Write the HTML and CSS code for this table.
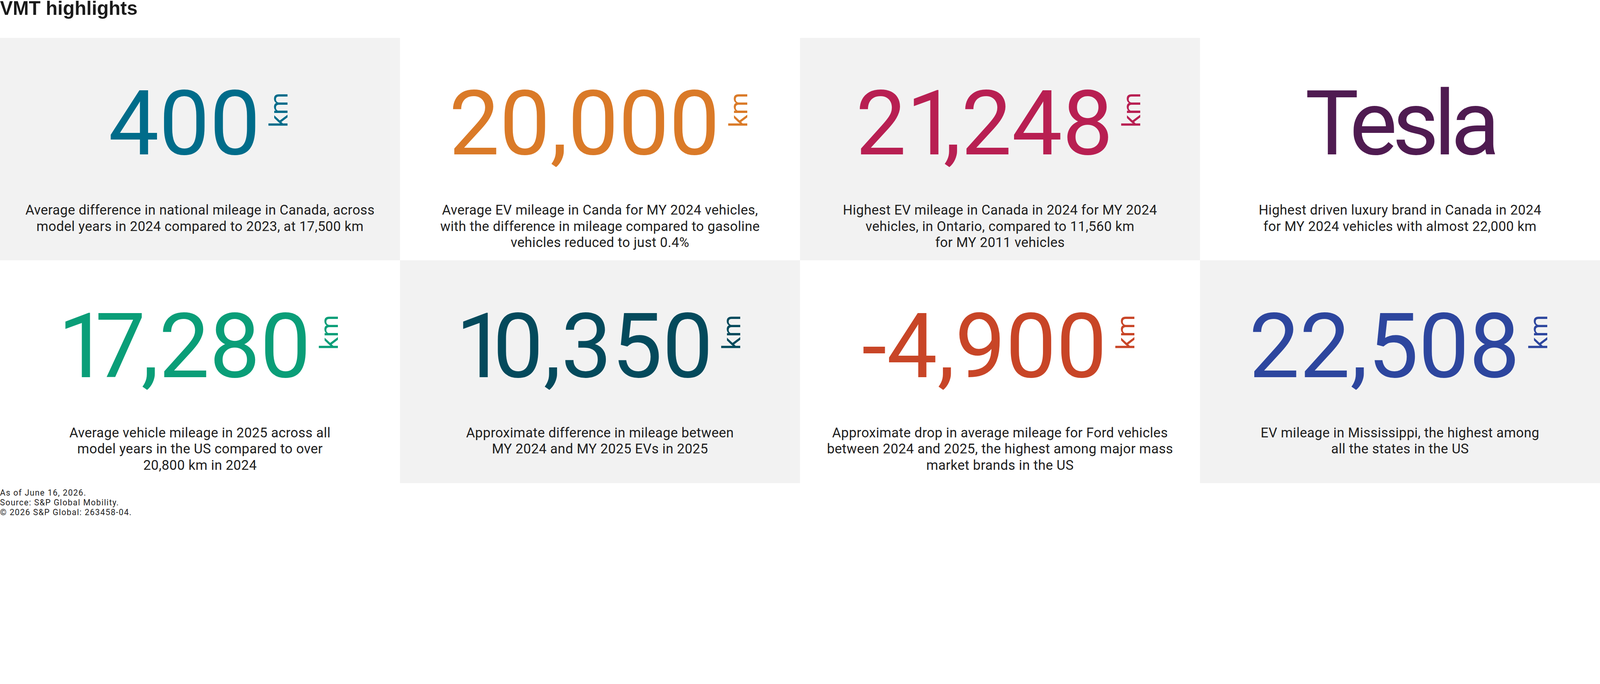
FILE: index.html
```html
<!DOCTYPE html>
<html lang="en">
<head>
<meta charset="utf-8">
<title>VMT highlights</title>
<link rel="stylesheet" href="styles.css">
</head>
<body>
<h1 class="title">VMT highlights</h1>
<div class="grid">
  <div class="card grey">
    <div class="figure"><span class="num c-teal">400</span><span class="unit c-teal">km</span></div>
    <p class="desc">Average difference in national mileage in Canada, across<br>model years in 2024 compared to 2023, at 17,500 km</p>
  </div>
  <div class="card">
    <div class="figure"><span class="num c-orange">20,000</span><span class="unit c-orange">km</span></div>
    <p class="desc">Average EV mileage in Canda for MY 2024 vehicles,<br>with the difference in mileage compared to gasoline<br>vehicles reduced to just 0.4%</p>
  </div>
  <div class="card grey">
    <div class="figure"><span class="num c-crimson">2<span class="one">1</span>,248</span><span class="unit c-crimson">km</span></div>
    <p class="desc">Highest EV mileage in Canada in 2024 for MY 2024<br>vehicles, in Ontario, compared to 11,560 km<br>for MY 2011 vehicles</p>
  </div>
  <div class="card">
    <div class="figure"><span class="num brand c-purple">Tesla</span></div>
    <p class="desc">Highest driven luxury brand in Canada in 2024<br>for MY 2024 vehicles with almost 22,000 km</p>
  </div>
  <div class="card">
    <div class="figure"><span class="num c-green"><span class="one">1</span><span class="seven">7</span>,280</span><span class="unit c-green">km</span></div>
    <p class="desc">Average vehicle mileage in 2025 across all<br>model years in the US compared to over<br>20,800 km in 2024</p>
  </div>
  <div class="card grey">
    <div class="figure"><span class="num c-petrol"><span class="one">1</span>0,350</span><span class="unit c-petrol">km</span></div>
    <p class="desc">Approximate difference in mileage between<br>MY 2024 and MY 2025 EVs in 2025</p>
  </div>
  <div class="card">
    <div class="figure"><span class="num c-red">-4,900</span><span class="unit c-red">km</span></div>
    <p class="desc">Approximate drop in average mileage for Ford vehicles<br>between 2024 and 2025, the highest among major mass<br>market brands in the US</p>
  </div>
  <div class="card grey">
    <div class="figure"><span class="num c-blue">22,508</span><span class="unit c-blue">km</span></div>
    <p class="desc">EV mileage in Mississippi, the highest among<br>all the states in the US</p>
  </div>
</div>
<div class="footer">
  <p class="note">As of June 16, 2026.</p>
  <p class="note">Source: S&amp;P Global Mobility.</p>
  <p class="note">© 2026 S&amp;P Global: 263458-04.</p>
</div>
</body>
</html>
```

FILE: styles.css
```css
/* 1rem = 10 px of the 5417px-wide design, scaled to the viewport width */
html {
  font-size: calc(100vw / 541.7);
}
html, body {
  margin: 0;
  padding: 0;
  background: #ffffff;
}
body {
  font-family: Roboto, "Liberation Sans", Arial, sans-serif;
  color: #1e1e1e;
}
.title {
  margin: 0 0 7rem 0;
  font-family: "Liberation Sans", Arial, sans-serif;
  font-weight: 700;
  font-size: 6.5rem;
  line-height: 5.8rem;
  color: #1a1a1a;
}
.grid {
  display: grid;
  grid-template-columns: repeat(4, 1fr);
  grid-auto-rows: 75.3rem;
}
.card {
  display: flex;
  flex-direction: column;
  align-items: center;
  padding-top: 14.1rem;
  box-sizing: border-box;
  background: #ffffff;
  min-width: 0;
}
.card.grey {
  background: #f2f2f2;
}
.figure {
  display: flex;
  align-items: flex-start;
  justify-content: center;
  height: 30rem;
}
.num {
  font-family: Roboto, sans-serif;
  font-weight: 400;
  font-size: 30.5rem;
  line-height: 30rem;
}
.one {
  letter-spacing: -0.15em;
}
.seven {
  letter-spacing: -0.05em;
}
.brand {
  letter-spacing: -0.055em;
}
.unit {
  font-family: Roboto, sans-serif;
  font-size: 8.5rem;
  line-height: 8.5rem;
  writing-mode: vertical-rl;
  transform: rotate(180deg);
  margin-top: 4.4rem;
  margin-left: 2.1rem;
}
.desc {
  margin: 11.5rem 0 0 0;
  font-size: 4.6rem;
  line-height: 5.5rem;
  letter-spacing: 0.05rem;
  text-align: center;
  color: #1e1e1e;
}
.footer {
  padding-top: 1.6rem;
}
.note {
  margin: 0;
  font-size: 2.8rem;
  line-height: 3.33rem;
  letter-spacing: 0.19rem;
  color: #1e1e1e;
}
.c-teal { color: #006c8a; }
.c-orange { color: #da7a28; }
.c-crimson { color: #b81f52; }
.c-purple { color: #4f1b51; }
.c-green { color: #0a9e78; }
.c-petrol { color: #044a5c; }
.c-red { color: #c84527; }
.c-blue { color: #2d469e; }
```
